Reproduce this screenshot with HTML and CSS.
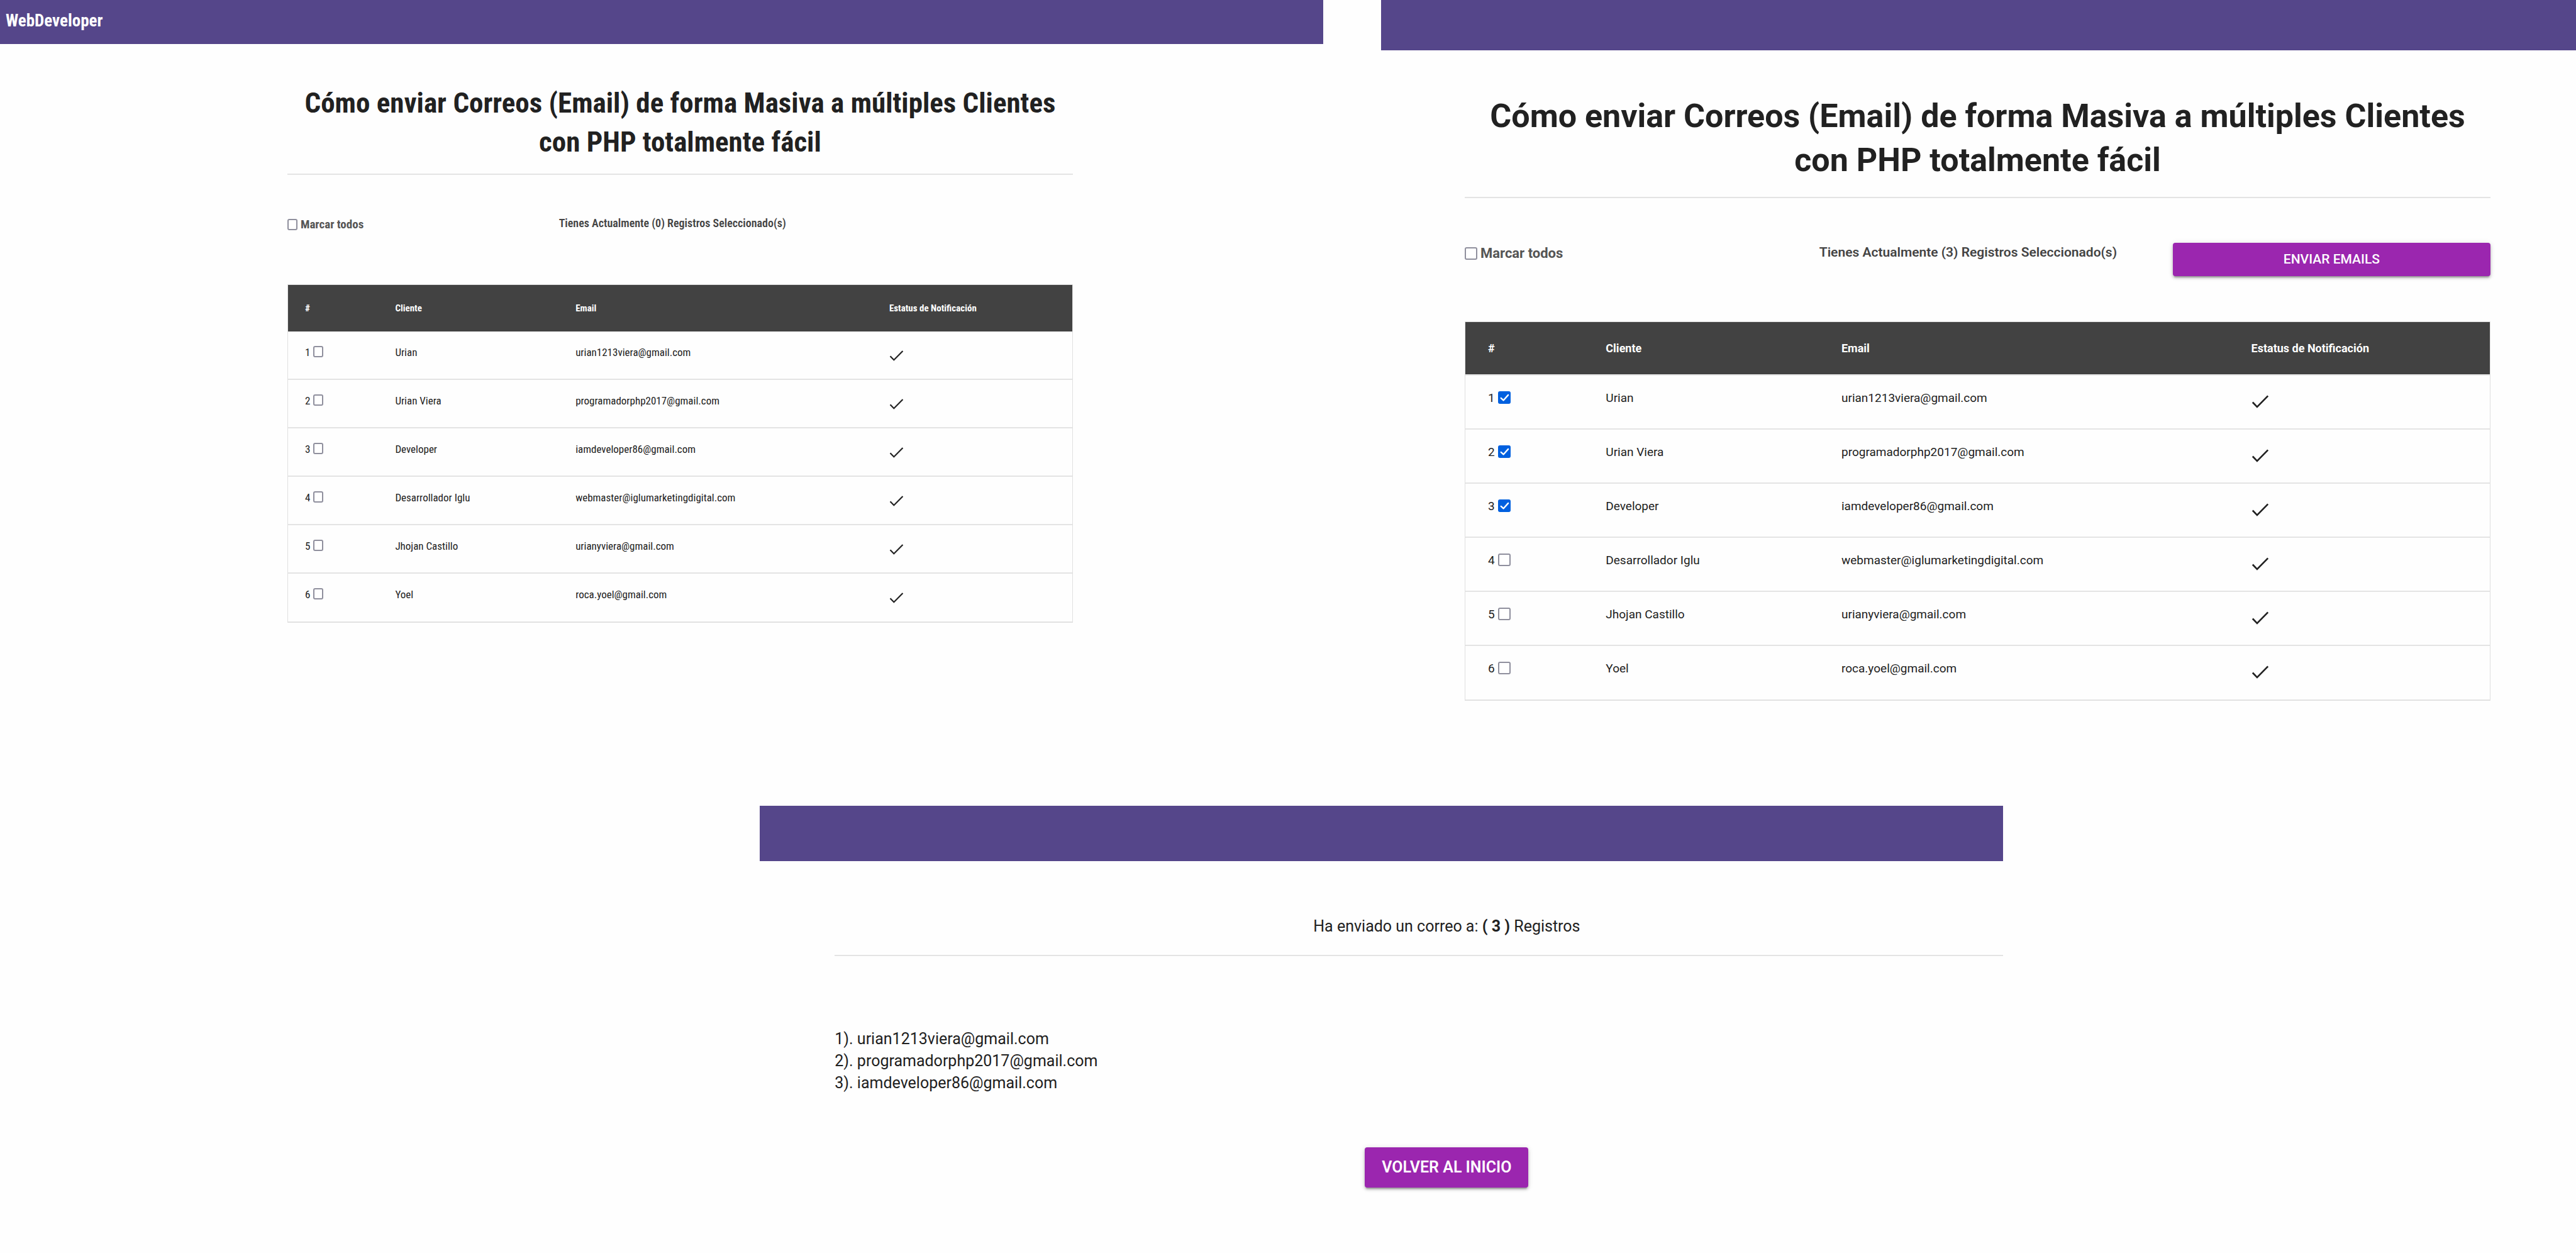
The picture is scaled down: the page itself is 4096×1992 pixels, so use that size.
FILE: index.html
```html
<!DOCTYPE html>
<html lang="es">
<head>
<meta charset="utf-8">
<meta name="viewport" content="width=device-width, initial-scale=1">
<title>WebDeveloper</title>
<link rel="stylesheet" href="styles.css">
</head>
<body>
<svg width="0" height="0" class="sprite" aria-hidden="true">
  <symbol id="check" viewBox="0 0 92 74">
    <path d="M5 42 L29 67 L87 8" fill="none" stroke="currentColor" stroke-width="9" stroke-linecap="butt" stroke-linejoin="miter"/>
  </symbol>
</svg>
<div class="board">
  <section class="panel panel-compact">
    <nav class="bar"><a class="brand" href="#">WebDeveloper</a></nav>
    <main class="content">
      <h1 class="title">Cómo enviar Correos (Email) de forma Masiva a múltiples Clientes<br>con PHP totalmente fácil</h1>
      <hr class="rule">
      <div class="toolbar">
        <label class="mark-all"><input class="tick" type="checkbox">Marcar todos</label>
        <p class="count">Tienes Actualmente (0) Registros Seleccionado(s)</p>
      </div>
      <table class="clients">
        <colgroup><col class="col-id"><col class="col-client"><col class="col-email"><col class="col-status"></colgroup>
        <thead>
          <tr><th scope="col">#</th><th scope="col">Cliente</th><th scope="col">Email</th><th scope="col">Estatus de Notificación</th></tr>
        </thead>
        <tbody>
          <tr><td><label class="pick">1<input class="tick" type="checkbox"></label></td><td>Urian</td><td>urian1213viera@gmail.com</td><td><svg class="check" role="img" aria-label="Notificado"><use href="#check"/></svg></td></tr>
          <tr><td><label class="pick">2<input class="tick" type="checkbox"></label></td><td>Urian Viera</td><td>programadorphp2017@gmail.com</td><td><svg class="check" role="img" aria-label="Notificado"><use href="#check"/></svg></td></tr>
          <tr><td><label class="pick">3<input class="tick" type="checkbox"></label></td><td>Developer</td><td>iamdeveloper86@gmail.com</td><td><svg class="check" role="img" aria-label="Notificado"><use href="#check"/></svg></td></tr>
          <tr><td><label class="pick">4<input class="tick" type="checkbox"></label></td><td>Desarrollador Iglu</td><td>webmaster@iglumarketingdigital.com</td><td><svg class="check" role="img" aria-label="Notificado"><use href="#check"/></svg></td></tr>
          <tr><td><label class="pick">5<input class="tick" type="checkbox"></label></td><td>Jhojan Castillo</td><td>urianyviera@gmail.com</td><td><svg class="check" role="img" aria-label="Notificado"><use href="#check"/></svg></td></tr>
          <tr><td><label class="pick">6<input class="tick" type="checkbox"></label></td><td>Yoel</td><td>roca.yoel@gmail.com</td><td><svg class="check" role="img" aria-label="Notificado"><use href="#check"/></svg></td></tr>
        </tbody>
      </table>
    </main>
  </section>

  <section class="panel panel-wide">
    <nav class="bar"></nav>
    <main class="content">
      <h1 class="title">Cómo enviar Correos (Email) de forma Masiva a múltiples Clientes<br>con PHP totalmente fácil</h1>
      <hr class="rule">
      <div class="toolbar">
        <label class="mark-all"><input class="tick" type="checkbox">Marcar todos</label>
        <p class="count">Tienes Actualmente (3) Registros Seleccionado(s)</p>
        <button class="btn" type="submit">ENVIAR EMAILS</button>
      </div>
      <table class="clients">
        <colgroup><col class="col-id"><col class="col-client"><col class="col-email"><col class="col-status"></colgroup>
        <thead>
          <tr><th scope="col">#</th><th scope="col">Cliente</th><th scope="col">Email</th><th scope="col">Estatus de Notificación</th></tr>
        </thead>
        <tbody>
          <tr><td><label class="pick">1<input class="tick" type="checkbox" checked></label></td><td>Urian</td><td>urian1213viera@gmail.com</td><td><svg class="check" role="img" aria-label="Notificado"><use href="#check"/></svg></td></tr>
          <tr><td><label class="pick">2<input class="tick" type="checkbox" checked></label></td><td>Urian Viera</td><td>programadorphp2017@gmail.com</td><td><svg class="check" role="img" aria-label="Notificado"><use href="#check"/></svg></td></tr>
          <tr><td><label class="pick">3<input class="tick" type="checkbox" checked></label></td><td>Developer</td><td>iamdeveloper86@gmail.com</td><td><svg class="check" role="img" aria-label="Notificado"><use href="#check"/></svg></td></tr>
          <tr><td><label class="pick">4<input class="tick" type="checkbox"></label></td><td>Desarrollador Iglu</td><td>webmaster@iglumarketingdigital.com</td><td><svg class="check" role="img" aria-label="Notificado"><use href="#check"/></svg></td></tr>
          <tr><td><label class="pick">5<input class="tick" type="checkbox"></label></td><td>Jhojan Castillo</td><td>urianyviera@gmail.com</td><td><svg class="check" role="img" aria-label="Notificado"><use href="#check"/></svg></td></tr>
          <tr><td><label class="pick">6<input class="tick" type="checkbox"></label></td><td>Yoel</td><td>roca.yoel@gmail.com</td><td><svg class="check" role="img" aria-label="Notificado"><use href="#check"/></svg></td></tr>
        </tbody>
      </table>
    </main>
  </section>
</div>

<section class="result">
  <nav class="bar"></nav>
  <main class="result-content">
    <p class="summary">Ha enviado un correo a: <strong>( 3 )</strong> Registros</p>
    <hr class="rule">
    <div class="sent">
      <p>1). urian1213viera@gmail.com</p>
      <p>2). programadorphp2017@gmail.com</p>
      <p>3). iamdeveloper86@gmail.com</p>
    </div>
    <a class="btn btn-back" href="#">VOLVER AL INICIO</a>
  </main>
</section>
</body>
</html>
```
FILE: styles.css
```css
* { box-sizing: border-box; }

body {
  margin: 0;
  background: #fefefe;
  color: #212121;
  font-family: Roboto, "Liberation Sans", sans-serif;
}

h1, p { margin: 0; }

.sprite { display: block; }

.board {
  display: grid;
  grid-template-columns: 2104fr 1900fr;
  column-gap: 92px;
  align-items: start;
}

.panel-compact {
  --bar: 70px;
  --title-gap: 63px;
  --title: 45px;
  --title-line: 62px;
  --rule-gap: 19px;
  --toolbar-gap: 63px;
  --toolbar: 111px;
  --label: 19px;
  --count: 18px;
  --count-line: 28px;
  --tick-w: 16px;
  --tick-h: 18px;
  --tick-gap: 5px;
  --tick-border: 2px;
  --head: 15px;
  --head-h: 74px;
  --head-edge: 0px;
  --cell: 17px;
  --cell-line: 24px;
  --cell-top: 21px;
  --row: 77px;
  --pad: 27px;
  --check-w: 23px;
  --check-h: 18px;
  --check-top: 8px;
  --inset: 21.72%;
  --width: 59.36%;
  font-family: "Roboto Condensed", Roboto, "Liberation Sans", sans-serif;
}

.panel-wide {
  --bar: 80px;
  --title-gap: 70px;
  --title: 52px;
  --title-line: 70px;
  --rule-gap: 23px;
  --toolbar-gap: 71px;
  --toolbar: 125px;
  --label: 22px;
  --count: 21px;
  --count-line: 30px;
  --tick-w: 20px;
  --tick-h: 20px;
  --tick-gap: 5px;
  --tick-border: 2px;
  --head: 18px;
  --head-h: 85px;
  --head-edge: 2px;
  --cell: 19px;
  --cell-line: 28px;
  --cell-top: 22px;
  --row: 86px;
  --pad: 36px;
  --check-w: 28px;
  --check-h: 22px;
  --check-top: 8px;
  --inset: 7%;
  --width: 85.84%;
}

.bar {
  height: var(--bar);
  background: #55468a;
}

.brand {
  display: inline-block;
  padding: 0 9px;
  color: #fff;
  font-size: 27px;
  font-weight: 700;
  line-height: 66px;
  text-decoration: none;
}

.content {
  width: var(--width);
  margin-left: var(--inset);
  padding-top: var(--title-gap);
}

.title {
  font-size: var(--title);
  font-weight: 700;
  line-height: var(--title-line);
  text-align: center;
  white-space: nowrap;
}

.rule {
  height: 2px;
  margin: var(--rule-gap) 0 0;
  border: 0;
  background: #e4e4e4;
}

.toolbar {
  display: grid;
  grid-template-columns: 346fr 345fr 310fr;
  align-items: start;
  height: var(--toolbar);
  margin-top: var(--toolbar-gap);
}

.mark-all {
  display: flex;
  align-items: center;
  gap: var(--tick-gap);
  padding-top: 2px;
  color: #555;
  font-size: var(--label);
  font-weight: 700;
  line-height: var(--count-line);
}

.count {
  color: #444;
  font-size: var(--count);
  font-weight: 600;
  line-height: var(--count-line);
  white-space: nowrap;
}

.tick {
  flex: none;
  appearance: none;
  width: var(--tick-w);
  height: var(--tick-h);
  margin: 0;
  border: var(--tick-border) solid #8f8f9d;
  border-radius: 3px;
  background: #fff;
}

.tick:checked {
  border: 0;
  background: #0060df url("data:image/svg+xml,%3Csvg xmlns='http://www.w3.org/2000/svg' viewBox='0 0 68 68'%3E%3Cpath d='M16 37 L29 49 L55 20' fill='none' stroke='white' stroke-width='8' stroke-linecap='round' stroke-linejoin='round'/%3E%3C/svg%3E") center / 100% no-repeat;
}

.clients {
  width: 100%;
  border: 1px solid #e0e0e0;
  border-spacing: 0;
  table-layout: fixed;
}

.col-id { width: 11.5%; }
.col-client { width: 23%; }
.col-email { width: 40%; }
.col-status { width: 25.5%; }

.clients th {
  height: var(--head-h);
  padding: 0 0 0 var(--pad);
  border-bottom: var(--head-edge) solid #e4e4e4;
  background: #424242;
  color: #fff;
  font-size: var(--head);
  font-weight: 700;
  text-align: left;
}

.clients td {
  height: var(--row);
  padding: var(--cell-top) 0 0 var(--pad);
  border-bottom: 2px solid #e4e4e4;
  font-size: var(--cell);
  line-height: var(--cell-line);
  vertical-align: top;
}

.clients tr:last-child td { border-bottom-width: 1px; }

.pick {
  display: flex;
  align-items: center;
  gap: var(--tick-gap);
}

.pick .tick { margin-bottom: 2px; }

.check {
  display: block;
  width: var(--check-w);
  height: var(--check-h);
  margin-top: var(--check-top);
}

.btn {
  padding: 12px 27px;
  border: 0;
  border-radius: 4px;
  background: #9b26af;
  box-shadow: 0 3px 4px rgba(0, 0, 0, .2), 0 4px 2px -2px rgba(0, 0, 0, .2), 0 1px 8px rgba(0, 0, 0, .14);
  color: #fff;
  font-family: inherit;
  font-size: 21px;
  font-weight: 500;
  line-height: 29px;
  text-align: center;
  text-decoration: none;
}

.result {
  --bar: 88px;
  --rule-gap: 28px;
  width: 48.27%;
  margin: 167px 0 0 29.5%;
  overflow: hidden;
  font-size: 25px;
  line-height: 35px;
}

.result-content {
  display: flex;
  flex-direction: column;
  margin-right: -88px;
  padding: 86px 0 100px 119px;
}

.summary { text-align: center; }

.sent { margin-top: 114px; }

.btn-back {
  align-self: center;
  margin-top: 85px;
  font-size: 25px;
  font-weight: 600;
  line-height: 40px;
}
```
